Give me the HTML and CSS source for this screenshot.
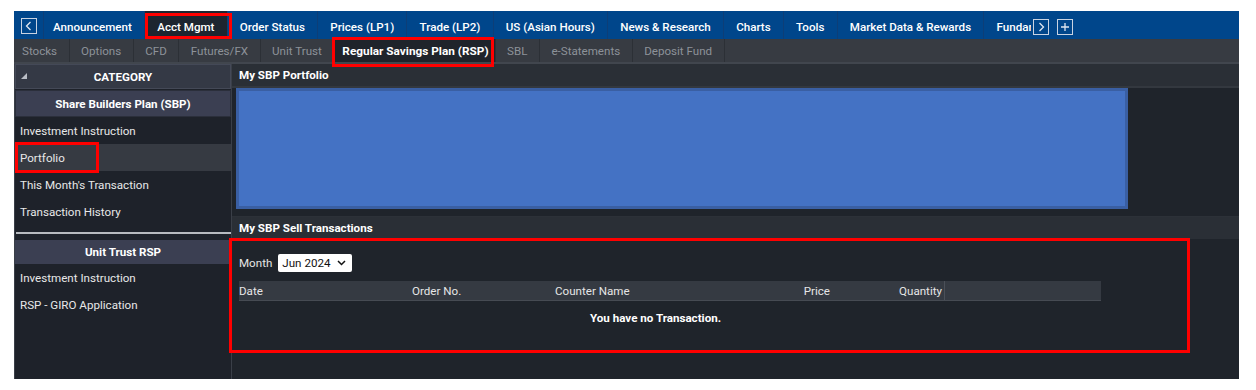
FILE: index.html
```html
<!DOCTYPE html>
<html>
<head>
<meta charset="utf-8">
<link rel="stylesheet" href="styles.css">
</head>
<body>
<div class="app">
  <div class="nav">
    <div class="nav-btn-wrap"><span class="sq-btn"><svg width="10" height="10" viewBox="0 0 10 10"><path d="M6.5 1 L2.5 5 L6.5 9" fill="none" stroke="#dfe6f0" stroke-width="1.3"/></svg></span></div>
    <div class="nav-items">
      <span class="nav-item first">Announcement</span>
      <span class="nav-item active">Acct Mgmt</span>
      <span class="nav-item">Order Status</span>
      <span class="nav-item">Prices (LP1)</span>
      <span class="nav-item">Trade (LP2)</span>
      <span class="nav-item">US (Asian Hours)</span>
      <span class="nav-item">News &amp; Research</span>
      <span class="nav-item">Charts</span>
      <span class="nav-item">Tools</span>
      <span class="nav-item">Market Data &amp; Rewards</span>
      <span class="nav-item">Fundamentals</span>
    </div>
    <span class="sq-btn next"><svg width="10" height="10" viewBox="0 0 10 10"><path d="M3.5 1 L7.5 5 L3.5 9" fill="none" stroke="#dfe6f0" stroke-width="1.3"/></svg></span>
    <span class="sq-btn plus"><svg width="10" height="10" viewBox="0 0 10 10"><path d="M5 1 V9 M1 5 H9" fill="none" stroke="#dfe6f0" stroke-width="1.3"/></svg></span>
  </div>
  <div class="tabs">
    <span class="tab first">Stocks</span>
    <span class="tab">Options</span>
    <span class="tab">CFD</span>
    <span class="tab">Futures/FX</span>
    <span class="tab">Unit Trust</span>
    <span class="tab active">Regular Savings Plan (RSP)</span>
    <span class="tab">SBL</span>
    <span class="tab">e-Statements</span>
    <span class="tab">Deposit Fund</span>
  </div>
  <div class="body">
    <div class="sidebar">
      <div class="cat-head"><span class="tri"></span>CATEGORY</div>
      <div class="group-head">Share Builders Plan (SBP)</div>
      <div class="side-item">Investment Instruction</div>
      <div class="side-item selected">Portfolio</div>
      <div class="side-item">This Month's Transaction</div>
      <div class="side-item">Transaction History</div>
      <div class="side-sep"></div>
      <div class="group-head second">Unit Trust RSP</div>
      <div class="side-item">Investment Instruction</div>
      <div class="side-item">RSP - GIRO Application</div>
    </div>
    <div class="main">
      <div class="sec-head">My SBP Portfolio</div>
      <div class="portfolio-area"><div class="blue-box"></div></div>
      <div class="sec-head sell">My SBP Sell Transactions</div>
      <div class="sell-body">
        <div class="month-row">
          <span class="month-label">Month</span>
          <span class="select">Jun 2024<svg width="9" height="6" viewBox="0 0 9 6"><path d="M1 1 L4.5 4.5 L8 1" fill="none" stroke="#111" stroke-width="1.5"/></svg></span>
        </div>
        <div class="table">
          <div class="thead">
            <span class="th c-date">Date</span>
            <span class="th c-order">Order No.</span>
            <span class="th c-counter">Counter Name</span>
            <span class="th c-price">Price</span>
            <span class="th c-qty">Quantity</span>
            <span class="th c-fill"></span>
          </div>
          <div class="empty">You have no Transaction.</div>
        </div>
      </div>
    </div>
  </div>
  <div class="mark mark-acct"></div>
  <div class="mark mark-rsp"></div>
  <div class="mark mark-portfolio"></div>
  <div class="mark mark-sell"></div>
</div>
</body>
</html>
```
FILE: styles.css
```css
* { box-sizing: border-box; }
html, body { background: #ffffff; }
body {
  margin: 0;
  padding: 11px 17px 11px 14px;
  font-family: Roboto, "Liberation Sans", Arial, sans-serif;
}
.app {
  position: relative;
  width: 1225px;
  height: 368px;
  background: #1f242b;
  display: flex;
  flex-direction: column;
}
.nav {
  height: 28px;
  background: #00468b;
  display: flex;
  align-items: stretch;
  flex: none;
}
.nav-btn-wrap {
  width: 30px;
  display: flex;
  align-items: center;
  justify-content: center;
  border-right: 1px solid #0d3e77;
  padding-top: 2px;
}
.sq-btn {
  width: 16px;
  height: 16px;
  border: 1px solid #c9d3e2;
  display: flex;
  align-items: center;
  justify-content: center;
  align-self: center;
}
.sq-btn.next { margin-left: 2px; margin-top: 3px; }
.sq-btn.plus { margin-left: 8px; margin-top: 3px; }
.nav-items {
  width: 987px;
  overflow: hidden;
  display: flex;
  white-space: nowrap;
}
.nav-item {
  color: #ffffff;
  font-size: 11.6px;
  font-weight: 500;
  padding: 3px 12.2px 0;
  display: flex;
  align-items: center;
  border-right: 1px solid #0d3e77;
  flex: none;
}
.nav-item.first { padding-left: 9px; }
.nav-item.active { background: #1d2530; }
.tabs {
  height: 25px;
  background: #373b42;
  display: flex;
  flex: none;
  border-bottom: 2px solid #41464e;
}
.tab {
  color: #8d9299;
  font-size: 11.6px;
  padding: 1px 11.5px 0;
  display: flex;
  align-items: center;
  border-right: 1px solid #2c3036;
}
.tab.first { padding-left: 8px; }
.tab.active {
  background: #1f242b;
  color: #ffffff;
  font-weight: 700;
  font-size: 11.8px;
  padding: 1px 6px 0 8px;
}
.body {
  flex: 1;
  display: flex;
  min-height: 0;
}
.sidebar {
  width: 218px;
  background: #1e222a;
  border-left: 1px solid #3a3f48;
  border-right: 1px solid #3a3f48;
  display: flex;
  flex-direction: column;
}
.cat-head {
  position: relative;
  height: 25px;
  background: #343945;
  border: 1px solid #444957;
  color: #ffffff;
  font-weight: 700;
  font-size: 11.6px;
  display: flex;
  align-items: center;
  justify-content: center;
  flex: none;
}
.tri {
  position: absolute;
  left: 5px;
  top: 8px;
  width: 0;
  height: 0;
  border-left: 6px solid transparent;
  border-bottom: 6px solid #b9bdc5;
}
.group-head {
  height: 27px;
  margin-top: 1px;
  background: #3b3f52;
  color: #ffffff;
  font-weight: 700;
  font-size: 11.6px;
  display: flex;
  align-items: center;
  justify-content: center;
  border: 1px solid #2b2f3b;
  flex: none;
}
.group-head.second { height: 24px; margin-top: 6px; border: none; }
.side-item {
  height: 27px;
  color: #e8e8e8;
  font-size: 11.6px;
  padding-left: 5px;
  display: flex;
  align-items: center;
  flex: none;
}
.side-item.selected { background: #363a42; }
.side-sep {
  height: 2px;
  background: #b8bbc0;
  margin: 7px 0 0 1px;
  flex: none;
}
.main {
  flex: 1;
  display: flex;
  flex-direction: column;
  background: #1f242b;
}
.sec-head {
  height: 24px;
  background: #2a2f36;
  border-bottom: 2px solid #33383f;
  color: #ffffff;
  font-weight: 700;
  font-size: 11.6px;
  display: flex;
  align-items: center;
  padding-left: 7px;
  flex: none;
}
.sec-head.sell {
  height: 23px;
  border-bottom: none;
  border-top: 1px solid #2c3138;
}
.portfolio-area {
  padding: 0 0 7px 4px;
}
.blue-box {
  width: 892px;
  height: 121px;
  background: #4472c4;
  border: 3px solid #3a5fa3;
}
.sell-body {
  padding: 15px 0 0 7px;
}
.month-row {
  display: flex;
  align-items: center;
  gap: 6px;
  height: 18px;
}
.month-label {
  color: #e6e6e6;
  font-size: 11.6px;
}
.select {
  width: 74px;
  height: 18px;
  background: #ffffff;
  border-radius: 2px;
  color: #111;
  font-size: 11.6px;
  display: flex;
  align-items: center;
  justify-content: space-between;
  padding: 0 6px 0 4px;
}
.table {
  margin-top: 9px;
  width: 862px;
}
.thead {
  height: 20px;
  background: #353a42;
  border-bottom: 1px solid #464b53;
  display: flex;
  align-items: stretch;
}
.th {
  color: #e6e6e6;
  font-size: 11.6px;
  display: flex;
  align-items: center;
}
.c-date { width: 173px; }
.c-order { width: 143px; }
.c-counter { width: 140px; }
.c-price { width: 135px; justify-content: flex-end; }
.c-qty { width: 115px; justify-content: flex-end; border-right: 1px solid #4b5058; padding-right: 2px; }
.c-fill { flex: 1; }
.empty {
  color: #ffffff;
  font-weight: 700;
  font-size: 11.6px;
  padding: 10px 0 0 351px;
}
.mark {
  position: absolute;
  border: 3px solid #ff0000;
  pointer-events: none;
}
.mark-acct { left: 131px; top: 2px; width: 87px; height: 26px; }
.mark-rsp { left: 318px; top: 26px; width: 162px; height: 30px; }
.mark-portfolio { left: 1px; top: 131px; width: 84px; height: 31px; }
.mark-sell { left: 215px; top: 227px; width: 961px; height: 115px; }
```
